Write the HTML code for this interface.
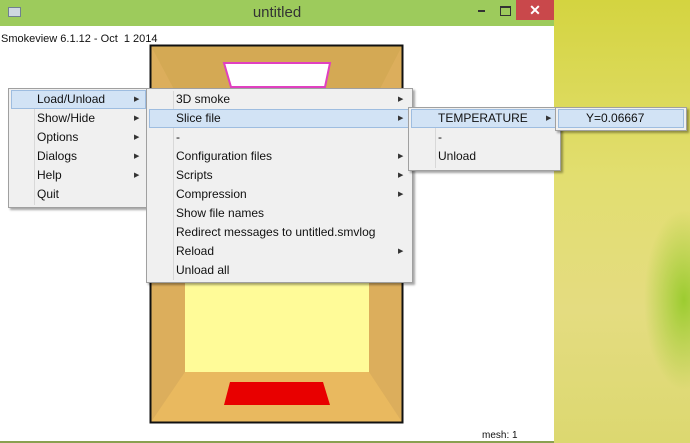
<!DOCTYPE html>
<html><head><style>
body{margin:0;width:690px;height:443px;overflow:hidden;position:relative;font-family:"Liberation Sans",sans-serif;background:#e0dc70;}
#desk{position:absolute;left:554px;top:0;width:136px;height:443px;background:radial-gradient(ellipse 40px 90px at 130px 300px,#9ccc30,rgba(160,200,60,0) 100%),linear-gradient(180deg,#d4d440 0%,#e2de70 40%,#e4dc80 70%,#dcd870 100%);}
#win{position:absolute;left:0;top:0;width:554px;height:441px;background:#fff;border-bottom:2px solid #8aa050;}
#title{position:absolute;left:0;top:0;width:554px;height:26px;background:#9dcb5c;}
#title .t{position:absolute;left:0;width:554px;text-align:center;top:4px;font-size:15px;color:#333;}
.m{position:absolute;background:#f0f0f0;border:1px solid #a0a0a0;box-shadow:2px 2px 2px rgba(0,0,0,.35);font-size:12px;color:#111;}
.m .g{position:absolute;top:2px;bottom:2px;width:1px;background:#d8d8d8;}
.i{position:absolute;height:19px;line-height:19px;}
.hl{position:absolute;height:19px;background:#d2e3f5;border:1px solid #9ebde0;box-sizing:border-box;}
.ar{position:absolute;font-size:7px;line-height:19px;color:#333;}
</style></head><body>
<div id="desk"></div>
<div id="win">
<div id="title"><div style="position:absolute;left:8px;top:7px;width:11px;height:8px;background:#cfd8e0;border:1px solid #708090"></div><div class="t">untitled</div>
<div style="position:absolute;left:478px;top:10px;width:7px;height:2px;background:#333"></div>
<div style="position:absolute;left:500px;top:6px;width:9px;height:7px;border:1px solid #333;border-top-width:2px"></div>
<div style="position:absolute;left:516px;top:0;width:38px;height:20px;background:#c9484b;color:#fff;text-align:center;font-size:14px;line-height:20px;font-weight:bold">✕</div>
</div>
<div style="position:absolute;left:1px;top:33px;font-size:11px;color:#111">Smokeview 6.1.12 - Oct&nbsp; 1 2014</div>
<svg style="position:absolute;left:0;top:0" width="554" height="441">
<rect x="150" y="45" width="253" height="378" fill="#dcae5c"/>
<polygon points="151,46 402,46 369,110 185,110" fill="#d4a954"/>
<polygon points="185,372 369,372 402,422 151,422" fill="#e9b95f"/>
<rect x="185" y="110" width="184" height="262" fill="#fffb98"/>
<rect x="150.5" y="45.5" width="252" height="377" fill="none" stroke="#111" stroke-width="2"/>
<polygon points="224,63 330,63 325,87 231,87" fill="#fff" stroke="#e040c0" stroke-width="2"/>
<polygon points="230,382 323,382 330,405 224,405" fill="#e80000"/>
</svg>
<div style="position:absolute;left:482px;top:430px;font-size:10px;color:#111">mesh: 1</div>
</div>

<div class="m" style="left:8px;top:88px;width:139px;height:118px">
<div class="g" style="left:25px"></div>
<div class="hl" style="left:2px;top:1px;width:135px"></div>
<div class="i" style="left:28px;top:1px">Load/Unload</div><div class="ar" style="left:125px;top:1px">▶</div>
<div class="i" style="left:28px;top:20px">Show/Hide</div><div class="ar" style="left:125px;top:20px">▶</div>
<div class="i" style="left:28px;top:39px">Options</div><div class="ar" style="left:125px;top:39px">▶</div>
<div class="i" style="left:28px;top:58px">Dialogs</div><div class="ar" style="left:125px;top:58px">▶</div>
<div class="i" style="left:28px;top:77px">Help</div><div class="ar" style="left:125px;top:77px">▶</div>
<div class="i" style="left:28px;top:96px">Quit</div>
</div>

<div class="m" style="left:146px;top:88px;width:265px;height:193px">
<div class="g" style="left:26px"></div>
<div class="hl" style="left:2px;top:20px;width:261px"></div>
<div class="i" style="left:29px;top:1px">3D smoke</div><div class="ar" style="left:251px;top:1px">▶</div>
<div class="i" style="left:29px;top:20px">Slice file</div><div class="ar" style="left:251px;top:20px">▶</div>
<div class="i" style="left:29px;top:39px">-</div>
<div class="i" style="left:29px;top:58px">Configuration files</div><div class="ar" style="left:251px;top:58px">▶</div>
<div class="i" style="left:29px;top:77px">Scripts</div><div class="ar" style="left:251px;top:77px">▶</div>
<div class="i" style="left:29px;top:96px">Compression</div><div class="ar" style="left:251px;top:96px">▶</div>
<div class="i" style="left:29px;top:115px">Show file names</div>
<div class="i" style="left:29px;top:134px">Redirect messages to untitled.smvlog</div>
<div class="i" style="left:29px;top:153px">Reload</div><div class="ar" style="left:251px;top:153px">▶</div>
<div class="i" style="left:29px;top:172px">Unload all</div>
</div>

<div class="m" style="left:408px;top:107px;width:151px;height:62px">
<div class="g" style="left:26px"></div>
<div class="hl" style="left:2px;top:1px;width:147px"></div>
<div class="i" style="left:29px;top:1px">TEMPERATURE</div><div class="ar" style="left:137px;top:1px">▶</div>
<div class="i" style="left:29px;top:20px">-</div>
<div class="i" style="left:29px;top:39px">Unload</div>
</div>

<div class="m" style="left:555px;top:107px;width:130px;height:22px">
<div class="hl" style="left:2px;top:1px;width:126px"></div>
<div class="i" style="left:30px;top:1px">Y=0.06667</div>
</div>
</body></html>
